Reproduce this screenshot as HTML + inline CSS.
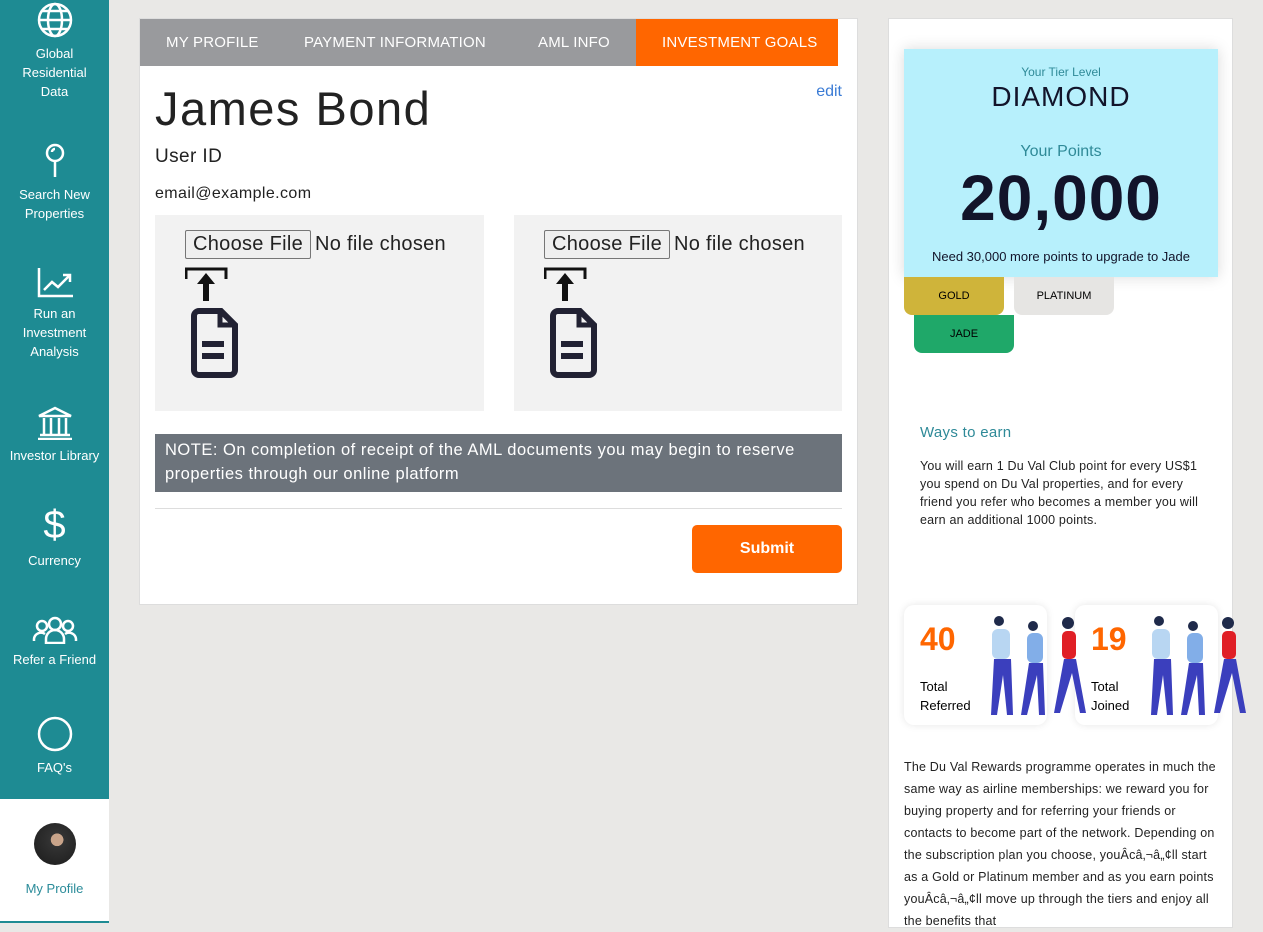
<!DOCTYPE html>
<html><head><meta charset="utf-8"><style>
*{box-sizing:border-box;margin:0;padding:0}
body{width:1263px;height:923px;overflow:hidden;background:#e9e8e6;font-family:"Liberation Sans",sans-serif;position:relative}
.sb{position:absolute;left:0;top:0;width:109px;height:923px;background:#1e8b93}
.it{position:absolute;left:0;width:109px;text-align:center;color:#fff;font-size:13px;line-height:19px}
.it svg{display:block;margin:0 auto 6px}
.prof{position:absolute;left:0;top:799px;width:109px;height:124px;background:#fff;border-bottom:2px solid #1e8b93}
.card{position:absolute;left:139px;top:18px;width:719px;height:587px;background:#fff;border:1px solid #ddd}
.tabs{position:absolute;left:0;top:0;width:698px;height:47px;background:#999a9d}
.tab{position:absolute;top:0;color:#fff;font-size:15px;line-height:47px;white-space:nowrap;letter-spacing:.2px}
.tab.a{background:#ff6600;left:496px;width:202px;padding-left:26px}
.up{position:absolute;top:196px;width:329px;height:196px;background:#f2f2f2}
.fb{position:absolute;left:30px;top:15px;font-size:20px;color:#222;white-space:nowrap;letter-spacing:.3px}
.fb span.b{display:inline-block;border:1px solid #767676;background:#efefef;padding:2px 7px;border-radius:2px;margin-right:4px}
.rp{position:absolute;left:888px;top:18px;width:345px;height:910px;background:#fff;border:1px solid #ddd}
</style></head><body>
<div class="sb">
<div class="it" style="top:2px"><svg width="36" height="36" viewBox="0 0 36 36" fill="none" stroke="#fff" stroke-width="2.5"><circle cx="18" cy="18" r="16"/><ellipse cx="18" cy="18" rx="7" ry="16"/><line x1="2" y1="18" x2="34" y2="18"/><path d="M5 9h26M5 27h26"/></svg>Global<br>Residential<br>Data</div>
<div class="it" style="top:143px"><svg width="24" height="36" viewBox="0 0 24 36" fill="none" stroke="#fff" stroke-width="2.5"><circle cx="12" cy="10" r="8"/><line x1="12" y1="18" x2="12" y2="34"/><path d="M9 9a3 3 0 0 1 3-3"/></svg>Search New<br>Properties</div>
<div class="it" style="top:268px"><svg width="36" height="30" viewBox="0 0 36 30" fill="none" stroke="#fff" stroke-width="2.5"><path d="M2 0v28h34"/><path d="M7 22l8-8 6 5 12-12M26 7h7v7"/></svg>Run an<br>Investment<br>Analysis</div>
<div class="it" style="top:406px"><svg width="36" height="34" viewBox="0 0 36 34" fill="none" stroke="#fff" stroke-width="2.5"><path d="M2 10L18 2l16 8z"/><path d="M7 12v16M14 12v16M22 12v16M29 12v16M3 29h30M1 33h34"/></svg>Investor Library</div>
<div class="it" style="top:505px"><div style="font-size:40px;line-height:40px;margin-bottom:6px">$</div>Currency</div>
<div class="it" style="top:616px"><svg width="46" height="28" viewBox="0 0 46 28" fill="none" stroke="#fff" stroke-width="2.5"><circle cx="23" cy="8" r="6"/><circle cx="10" cy="10" r="5"/><circle cx="36" cy="10" r="5"/><path d="M14 27v-4a9 9 0 0 1 18 0v4zM2 25v-2a7 7 0 0 1 11-5M44 25v-2a7 7 0 0 0-11-5"/></svg>Refer a Friend</div>
<div class="it" style="top:716px"><svg width="36" height="36" viewBox="0 0 36 36" fill="none" stroke="#fff" stroke-width="2.5"><circle cx="18" cy="18" r="16"/></svg>FAQ's</div>
</div>
<div class="prof"><div style="position:absolute;left:34px;top:24px;width:42px;height:42px;border-radius:50%;background:radial-gradient(circle at 55% 40%,#c9a48a 0 18%,#333 19%,#1a1a1a)"></div><div style="position:absolute;top:82px;width:109px;text-align:center;color:#2b8c9a;font-size:13px">My Profile</div></div>

<div class="card">
<div class="tabs"><div class="tab" style="left:26px">MY PROFILE</div><div class="tab" style="left:164px">PAYMENT INFORMATION</div><div class="tab" style="left:398px">AML INFO</div><div class="tab a">INVESTMENT GOALS</div></div>
<div style="position:absolute;right:15px;top:64px;color:#3a7bd5;font-size:16px">edit</div>
<div style="position:absolute;left:15px;top:62px;font-size:47px;color:#222;letter-spacing:1.5px">James Bond</div>
<div style="position:absolute;left:15px;top:127px;font-size:19px;color:#222;letter-spacing:.4px">User ID</div>
<div style="position:absolute;left:15px;top:166px;font-size:16px;color:#222;letter-spacing:.4px">email@example.com</div>
<div class="up" style="left:15px"><div class="fb"><span class="b">Choose File</span>No file chosen</div>
<svg style="position:absolute;left:30px;top:52px" width="66" height="116" viewBox="0 0 66 116"><path d="M1 12V2h40v10" fill="none" stroke="#111" stroke-width="3"/><path d="M21 6l-9 11h6v17h6V17h6z" fill="#111"/><path d="M14 44h22l14 14v45a5 5 0 0 1-5 5H14a5 5 0 0 1-5-5V49a5 5 0 0 1 5-5z" fill="none" stroke="#222233" stroke-width="6"/><path d="M35 44v14h15" fill="none" stroke="#222233" stroke-width="5"/><path d="M17 77h22M17 89h22" stroke="#222233" stroke-width="6"/></svg></div>
<div class="up" style="left:374px;width:328px"><div class="fb"><span class="b">Choose File</span>No file chosen</div>
<svg style="position:absolute;left:30px;top:52px" width="66" height="116" viewBox="0 0 66 116"><path d="M1 12V2h40v10" fill="none" stroke="#111" stroke-width="3"/><path d="M21 6l-9 11h6v17h6V17h6z" fill="#111"/><path d="M14 44h22l14 14v45a5 5 0 0 1-5 5H14a5 5 0 0 1-5-5V49a5 5 0 0 1 5-5z" fill="none" stroke="#222233" stroke-width="6"/><path d="M35 44v14h15" fill="none" stroke="#222233" stroke-width="5"/><path d="M17 77h22M17 89h22" stroke="#222233" stroke-width="6"/></svg></div>
<div style="position:absolute;left:15px;top:415px;width:687px;height:58px;background:#6c737b;color:#fff;font-size:16.5px;line-height:24px;padding:4px 10px;letter-spacing:.5px">NOTE: On completion of receipt of the AML documents you may begin to reserve properties through our online platform</div>
<div style="position:absolute;left:15px;top:489px;width:687px;border-top:1px solid #ddd"></div>
<div style="position:absolute;left:552px;top:506px;width:150px;height:48px;background:#ff6600;border-radius:5px;color:#fff;font-weight:bold;font-size:16px;text-align:center;line-height:48px">Submit</div>
</div>

<div class="rp">
<div style="position:absolute;left:15px;top:30px;width:314px;height:228px;background:#b7f0fc;box-shadow:0 0 14px rgba(0,0,0,.15);text-align:center;color:#12142a">
<div style="margin-top:16px;font-size:12px;color:#2f8a98">Your Tier Level</div>
<div style="font-size:28px;margin-top:2px;letter-spacing:1px">DIAMOND</div>
<div style="font-size:16px;color:#2f8a98;margin-top:30px">Your Points</div>
<div style="font-size:64px;font-weight:bold;line-height:66px;margin-top:4px;letter-spacing:1px">20,000</div>
<div style="font-size:13px;margin-top:18px">Need 30,000 more points to upgrade to Jade</div></div>
<div style="position:absolute;left:15px;top:258px;width:100px;height:38px;background:#cfb43a;border-radius:0 0 8px 8px;font-size:11px;text-align:center;line-height:38px">GOLD</div>
<div style="position:absolute;left:125px;top:258px;width:100px;height:38px;background:#e6e5e3;border-radius:0 0 8px 8px;font-size:11px;text-align:center;line-height:38px">PLATINUM</div>
<div style="position:absolute;left:25px;top:296px;width:100px;height:38px;background:#1fa869;border-radius:0 0 8px 8px;font-size:11px;text-align:center;line-height:38px">JADE</div>
<div style="position:absolute;left:31px;top:405px;font-size:15px;color:#2f8a98;letter-spacing:.3px">Ways to earn</div>
<div style="position:absolute;left:31px;top:438px;width:295px;font-size:12.5px;line-height:18px;color:#222;letter-spacing:.2px">You will earn 1 Du Val Club point for every US$1 you spend on Du Val properties, and for every friend you refer who becomes a member you will earn an additional 1000 points.</div>
<div style="position:absolute;left:15px;top:586px;width:143px;height:120px;background:#fff;border-radius:10px;box-shadow:0 0 8px rgba(0,0,0,.1)"><div style="position:absolute;left:16px;top:16px;color:#ff6600;font-size:32px;font-weight:bold">40</div><div style="position:absolute;left:16px;top:72px;font-size:13px;line-height:19px">Total<br>Referred</div></div>
<div style="position:absolute;left:186px;top:586px;width:143px;height:120px;background:#fff;border-radius:10px;box-shadow:0 0 8px rgba(0,0,0,.1)"><div style="position:absolute;left:16px;top:16px;color:#ff6600;font-size:32px;font-weight:bold">19</div><div style="position:absolute;left:16px;top:72px;font-size:13px;line-height:19px">Total<br>Joined</div></div>
<svg style="position:absolute;left:95px;top:594px" width="110" height="104"><g><rect x="8" y="16" width="18" height="30" rx="6" fill="#b8d6f2"/><circle cx="15" cy="8" r="5" fill="#1f2a4a"/><path d="M10 46l-3 56h6l6-40 4 40h6l-2-56z" fill="#3b3fbd"/><rect x="43" y="20" width="16" height="30" rx="6" fill="#82aee8"/><circle cx="49" cy="13" r="5" fill="#1f2a4a"/><path d="M45 50l-8 52h6l10-40 2 40h6l-2-52z" fill="#3b3fbd"/><rect x="78" y="18" width="14" height="28" rx="5" fill="#e01f26"/><circle cx="84" cy="10" r="6" fill="#1f2a4a"/><path d="M80 46l-10 54h6l12-40 8 40h6l-10-54z" fill="#3b3fbd"/></g></svg>
<svg style="position:absolute;left:255px;top:594px" width="110" height="104"><g><rect x="8" y="16" width="18" height="30" rx="6" fill="#b8d6f2"/><circle cx="15" cy="8" r="5" fill="#1f2a4a"/><path d="M10 46l-3 56h6l6-40 4 40h6l-2-56z" fill="#3b3fbd"/><rect x="43" y="20" width="16" height="30" rx="6" fill="#82aee8"/><circle cx="49" cy="13" r="5" fill="#1f2a4a"/><path d="M45 50l-8 52h6l10-40 2 40h6l-2-52z" fill="#3b3fbd"/><rect x="78" y="18" width="14" height="28" rx="5" fill="#e01f26"/><circle cx="84" cy="10" r="6" fill="#1f2a4a"/><path d="M80 46l-10 54h6l12-40 8 40h6l-10-54z" fill="#3b3fbd"/></g></svg>
<div style="position:absolute;left:15px;top:737px;width:315px;font-size:12.5px;line-height:22px;color:#222;letter-spacing:.2px">The Du Val Rewards programme operates in much the same way as airline memberships: we reward you for buying property and for referring your friends or contacts to become part of the network. Depending on the subscription plan you choose, youÂcâ‚¬â„¢ll start as a Gold or Platinum member and as you earn points youÂcâ‚¬â„¢ll move up through the tiers and enjoy all the benefits that</div>
</div>
</body></html>
